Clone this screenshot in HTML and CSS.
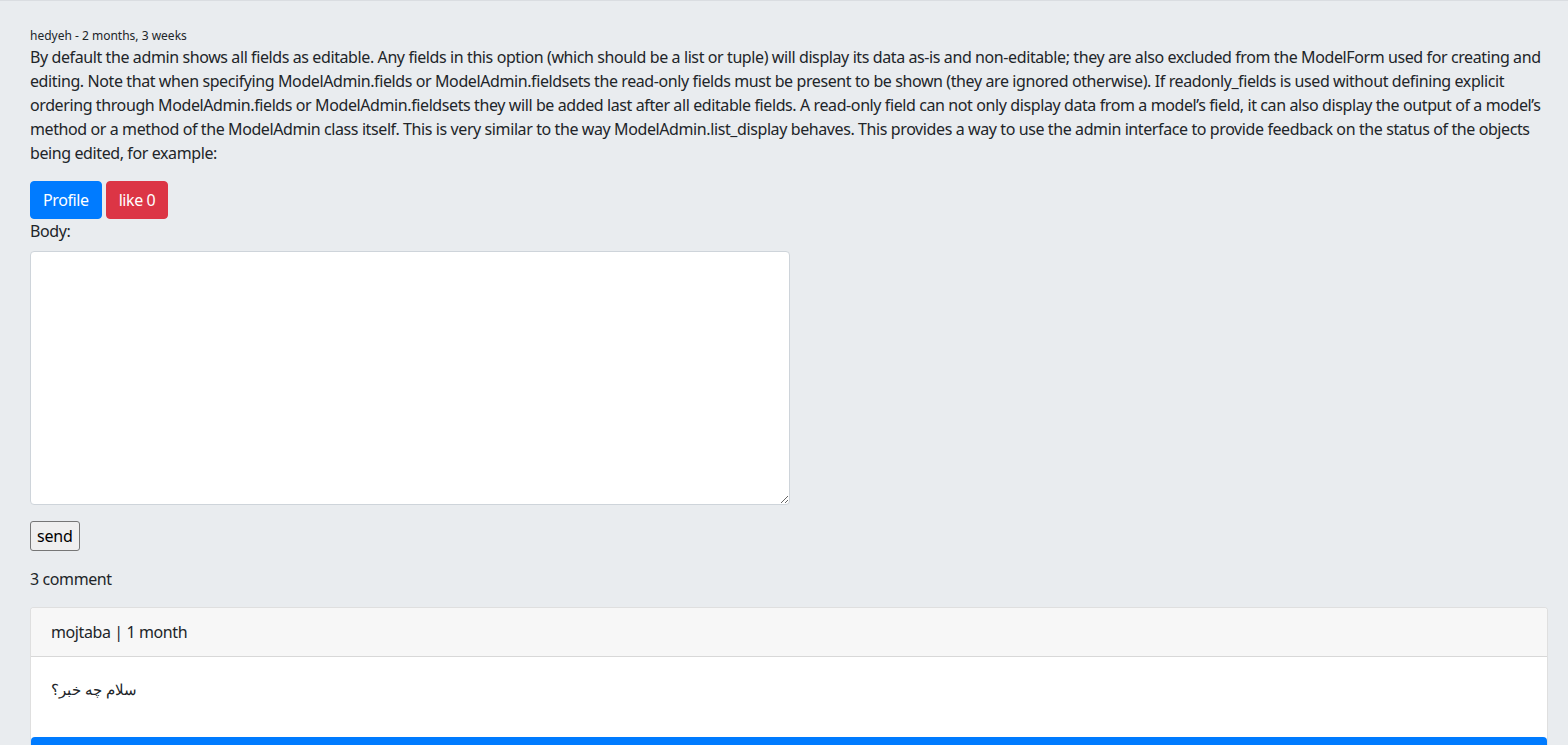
FILE: index.html
```html
<!DOCTYPE html>
<html lang="en">
<head>
<meta charset="utf-8">
<title>Post</title>
<link rel="stylesheet" href="styles.css">
</head>
<body>
<main class="page">
  <article class="post">
    <small class="meta">hedyeh - 2 months, 3 weeks</small>
    <p class="post-body">By default the admin shows all fields as editable. Any fields in this option (which should be a list or tuple) will display its data as-is and non-editable; they are also excluded from the ModelForm used for creating and<br>editing. Note that when specifying ModelAdmin.fields or ModelAdmin.fieldsets the read-only fields must be present to be shown (they are ignored otherwise). If readonly_fields is used without defining explicit<br>ordering through ModelAdmin.fields or ModelAdmin.fieldsets they will be added last after all editable fields. A read-only field can not only display data from a model’s field, it can also display the output of a model’s<br>method or a method of the ModelAdmin class itself. This is very similar to the way ModelAdmin.list_display behaves. This provides a way to use the admin interface to provide feedback on the status of the objects<br>being edited, for example:</p>
    <div class="actions">
      <a class="btn btn-primary" href="#">Profile</a>
      <a class="btn btn-danger" href="#">like 0</a>
    </div>
  </article>
  <form class="comment-form">
    <label class="field-label" for="body">Body:</label>
    <textarea id="body" class="field-input"></textarea>
    <div class="form-actions"><button type="button" class="send">send</button></div>
  </form>
  <p class="count">3 comment</p>
  <section class="card">
    <header class="card-header">mojtaba | 1 month</header>
    <div class="card-body">
      <p class="rtl" dir="rtl">سلام چه خبر؟</p>
    </div>
    <div class="card-bar"></div>
  </section>
</main>
</body>
</html>
```
FILE: styles.css
```css
html, body {
  margin: 0;
  padding: 0;
}
body {
  background: #e9ecef;
  color: #212529;
  font-family: "Noto Sans", "Noto Sans CJK SC", sans-serif;
  font-size: 16px;
  line-height: 24px;
  letter-spacing: -0.4px;
  border-top: 1px solid #dadde1;
  overflow: hidden;
}
.page {
  padding: 25px 20px 0 30px;
}
.post {
  display: flex;
  flex-direction: column;
}
.meta {
  font-size: 12px;
  line-height: 19px;
  letter-spacing: 0;
}
.post-body {
  margin: 0 0 16px;
  white-space: nowrap;
}
.actions {
  display: flex;
  gap: 4px;
}
.btn {
  display: inline-block;
  padding: 6px 12px;
  font-size: 16px;
  line-height: 24px;
  border-radius: 4px;
  color: #fff;
  text-decoration: none;
  border: 1px solid transparent;
}
.btn-primary { background: #007bff; border-color: #007bff; }
.btn-danger { background: #dc3545; border-color: #dc3545; }
.comment-form {
  display: flex;
  flex-direction: column;
  align-items: flex-start;
}
.field-label {
  margin: 0 0 8px;
}
.field-input {
  width: 760px;
  height: 254px;
  box-sizing: border-box;
  border: 1px solid #ced4da;
  border-radius: 4px;
  background: #fff;
  font: inherit;
  padding: 6px 12px;
  margin: 0;
}
.form-actions {
  margin-top: 16px;
}
.send {
  font-family: inherit;
  font-size: 16px;
  line-height: 22px;
  letter-spacing: -0.2px;
  padding: 3px 6px;
  border: 1px solid #767676;
  border-radius: 3px;
  background: #efefef;
  color: #000;
}
.count {
  margin: 16px 0 16px;
}
.card {
  background: #fff;
  border: 1px solid rgba(0,0,0,.125);
  border-radius: 4px;
  overflow: hidden;
}
.card-header {
  padding: 12px 20px;
  background: #f7f7f7;
  border-bottom: 1px solid rgba(0,0,0,.125);
}
.card-body {
  padding: 20px;
}
.rtl {
  margin: 0 0 16px;
  text-align: left;
  direction: ltr;
  unicode-bidi: plaintext;
  letter-spacing: 0;
  font-size: 15px;
}
.card-bar {
  height: 40px;
  background: #007bff;
  border-radius: 4px 4px 0 0;
}
```
